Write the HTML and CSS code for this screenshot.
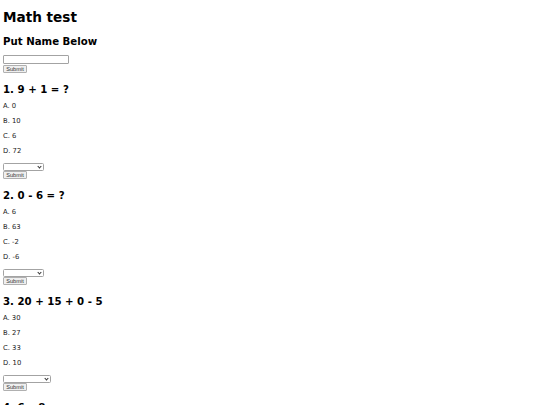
FILE: index.html
```html
<!DOCTYPE html>
<html lang="en">
<head>
<meta charset="utf-8">
<title>Math test</title>
<link rel="stylesheet" href="styles.css">
</head>
<body>
<h1 class="title">Math test</h1>
<h2 class="heading">Put Name Below</h2>
<form class="quiz-form name-form">
  <input type="text" class="name-input"><br>
  <button type="button" class="submit-btn">Submit</button>
</form>

<h2 class="heading">1. 9 + 1 = ?</h2>
<p class="option">A. 0</p>
<p class="option">B. 10</p>
<p class="option">C. 6</p>
<p class="option">D. 72</p>
<form class="quiz-form">
  <span class="select-wrap q1"><select class="answer-select"><option></option><option>A</option><option>B</option><option>C</option><option>D</option></select></span><br>
  <button type="button" class="submit-btn">Submit</button>
</form>

<h2 class="heading">2. 0 - 6 = ?</h2>
<p class="option">A. 6</p>
<p class="option">B. 63</p>
<p class="option">C. -2</p>
<p class="option">D. -6</p>
<form class="quiz-form">
  <span class="select-wrap q2"><select class="answer-select"><option></option><option>A</option><option>B</option><option>C</option><option>D</option></select></span><br>
  <button type="button" class="submit-btn">Submit</button>
</form>

<h2 class="heading">3. 20 + 15 + 0 - 5</h2>
<p class="option">A. 30</p>
<p class="option">B. 27</p>
<p class="option">C. 33</p>
<p class="option">D. 10</p>
<form class="quiz-form">
  <span class="select-wrap q3"><select class="answer-select"><option></option><option>A</option><option>B</option><option>C</option><option>D</option></select></span><br>
  <button type="button" class="submit-btn">Submit</button>
</form>

<h2 class="heading">4. 6 x 8</h2>
<p class="option">A. 48</p>
<p class="option">B. 42</p>
<p class="option">C. 54</p>
<p class="option">D. 56</p>
</body>
</html>
```

FILE: styles.css
```css
html, body {
  overflow: hidden;
}

body {
  margin: 0;
  padding: 0 3px;
  font-family: "DejaVu Sans", sans-serif;
  color: #000;
  background: #fff;
}

.title {
  font-size: 13.6px;
  line-height: 16px;
  font-weight: bold;
  margin: 9px 0 9px;
}

.heading {
  font-size: 10.2px;
  line-height: 12px;
  font-weight: bold;
  margin: 11px 0 6px;
}

.option {
  font-size: 6.8px;
  line-height: 9px;
  margin: 6px 0;
  color: #222;
}

.quiz-form {
  margin: 7px 0 0;
  line-height: 0;
}

.name-form {
  margin-top: 7px;
}

.name-input {
  box-sizing: border-box;
  width: 66px;
  height: 9px;
  margin: 0 0 1px;
  padding: 0;
  border: 1px solid #a3a3a3;
  border-radius: 1px;
  background: #fff;
  vertical-align: top;
}

.submit-btn {
  box-sizing: border-box;
  height: 8px;
  width: 24px;
  margin: 0;
  padding: 0;
  border: 1px solid #b0b0b0;
  border-radius: 1px;
  background: #efefef;
  color: #333;
  font-family: "Liberation Sans", Arial, sans-serif;
  font-size: 5.6px;
  line-height: 6px;
  vertical-align: top;
}

.select-wrap {
  position: relative;
  display: inline-block;
  vertical-align: top;
  line-height: 0;
}

.select-wrap::after {
  content: "";
  position: absolute;
  right: 3px;
  top: 1.6px;
  width: 2px;
  height: 2px;
  border-right: 1px solid #333;
  border-bottom: 1px solid #333;
  transform: rotate(45deg);
  pointer-events: none;
}

.answer-select {
  -webkit-appearance: none;
  appearance: none;
  box-sizing: border-box;
  height: 8px;
  margin: 0;
  padding: 0;
  border: 1px solid #a3a3a3;
  border-radius: 1.5px;
  background: #fff;
  font-size: 5px;
  vertical-align: top;
}

.q1 .answer-select,
.q2 .answer-select {
  width: 41px;
}

.q3 .answer-select {
  width: 48px;
}
```
